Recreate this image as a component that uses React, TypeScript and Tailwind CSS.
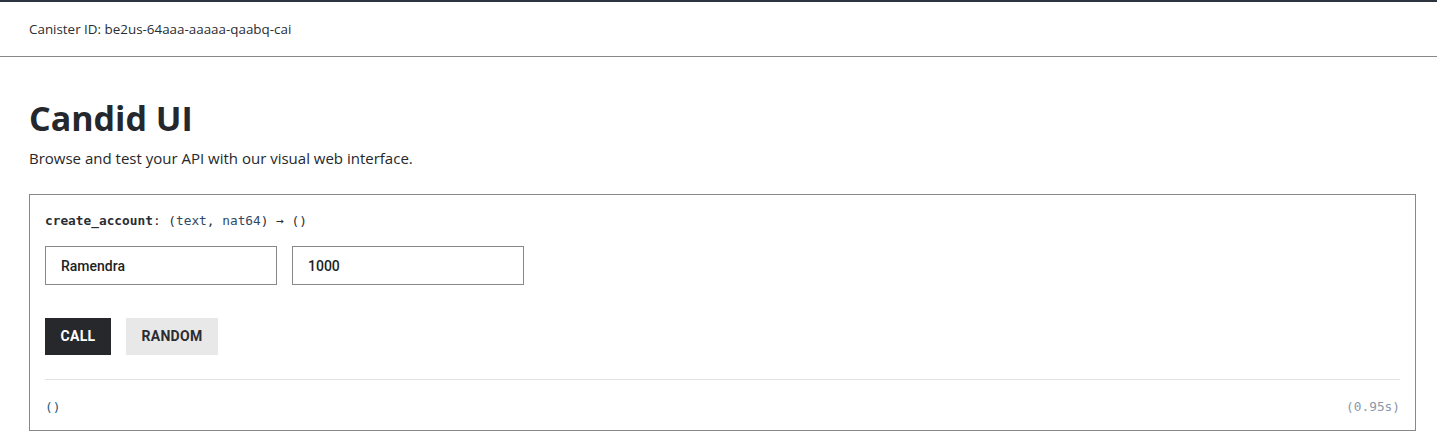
export default function App() {
  return (
    <div className="min-h-screen bg-white text-[#24272c] font-['Open_Sans',sans-serif]">
      <div className="h-[2px] bg-[#2d3440]" />
      {/* header */}
      <div className="h-[55px] border-b border-[#888888] px-[29px] flex items-center">
        <span className="text-[13.4px] text-[#2a2d33]">Canister ID: be2us-64aaa-aaaaa-qaabq-cai</span>
      </div>

      <div className="px-[29px] pr-[21px]">
        <h1 className="mt-[37px] text-[34px] leading-[48px] font-bold">Candid UI</h1>
        <p className="mt-[6px] text-[15px] leading-[20px]">Browse and test your API with our visual web interface.</p>

        {/* method card */}
        <div className="mt-[26px] border border-[#888888] px-[15px] pt-[17px] pb-[14px]">
          <div className="font-['DejaVu_Sans_Mono',monospace] text-[12.8px] leading-[18px] text-[#2a2d33]">
            <span className="font-bold">create_account</span>
            <span>: (</span>
            <span className="text-[#2f4a63]">text</span>
            <span>, </span>
            <span className="text-[#2f4a63]">nat64</span>
            <span>) → ()</span>
          </div>

          <div className="mt-[16px] flex gap-[15px]">
            <input
              defaultValue="Ramendra"
              className="w-[232px] h-[39px] border border-[#888888] px-[15px] font-['Roboto',sans-serif] font-medium text-[14px] text-[#1e1f22] outline-none"
            />
            <input
              defaultValue="1000"
              className="w-[232px] h-[39px] border border-[#888888] px-[15px] font-['Roboto',sans-serif] font-medium text-[14px] text-[#1e1f22] outline-none"
            />
          </div>

          <div className="mt-[33px] flex gap-[15px] font-['Roboto',sans-serif]">
            <button className="w-[66px] h-[37px] bg-[#26282c] text-white text-[14px] font-bold tracking-[0.3px]">
              CALL
            </button>
            <button className="w-[92px] h-[37px] bg-[#e8e8e8] text-[#2b2d33] text-[14px] font-bold tracking-[0.3px]">
              RANDOM
            </button>
          </div>

          <div className="mt-[24px] border-t border-[#e2e2e2]" />

          <div className="mt-[18px] flex justify-between font-['DejaVu_Sans_Mono',monospace] text-[12.8px] leading-[18px]">
            <span className="text-[#245a7a]">()</span>
            <span className="text-[#8a96a8]">(0.95s)</span>
          </div>
        </div>
      </div>
    </div>
  );
}
